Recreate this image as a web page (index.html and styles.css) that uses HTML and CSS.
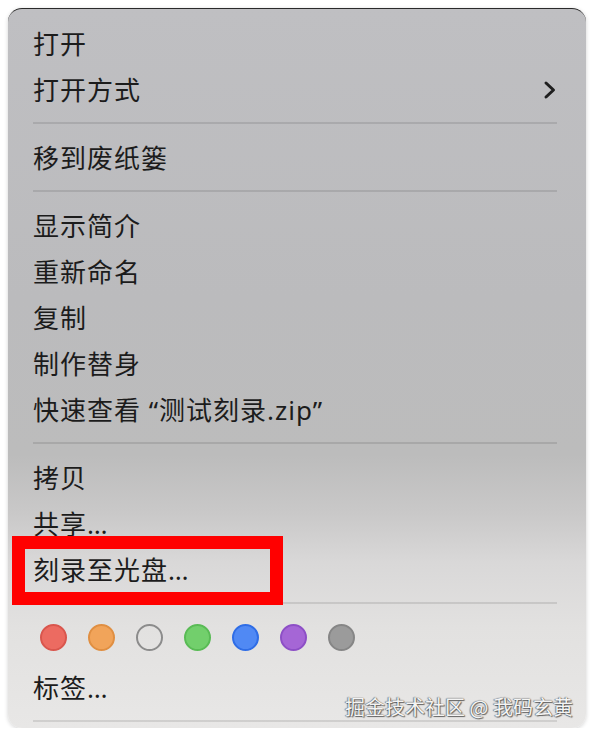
FILE: index.html
```html
<!DOCTYPE html>
<html lang="zh-CN">
<head>
    <meta charset="UTF-8">
    <meta name="viewport" content="width=device-width, initial-scale=1.0">
    <title>右键菜单</title>
    <link rel="stylesheet" href="styles.css">
</head>
<body>

    <!-- Context Menu -->
    <div class="menu">
        <div class="item">打开</div>
        <div class="item has-sub">
            <span>打开方式</span>
            <svg class="chevron" width="14" height="20" viewBox="0 0 14 20">
                <polyline points="3,3 10.5,10 3,17" fill="none" stroke="#1f1f1f" stroke-width="3" stroke-linecap="round" stroke-linejoin="round"/>
            </svg>
        </div>
        <div class="sep"></div>
        <div class="item">移到废纸篓</div>
        <div class="sep"></div>
        <div class="item">显示简介</div>
        <div class="item">重新命名</div>
        <div class="item">复制</div>
        <div class="item">制作替身</div>
        <div class="item">快速查看 “测试刻录.zip”</div>
        <div class="sep"></div>
        <div class="item">拷贝</div>
        <div class="item">共享…</div>
        <div class="item">刻录至光盘…</div>
        <div class="sep"></div>

        <!-- Tag colours -->
        <div class="tags">
            <span class="dot red"></span>
            <span class="dot orange"></span>
            <span class="dot none"></span>
            <span class="dot green"></span>
            <span class="dot blue"></span>
            <span class="dot purple"></span>
            <span class="dot gray"></span>
        </div>
        <div class="item">标签…</div>
        <div class="sep"></div>

        <!-- Highlight box -->
        <div class="highlight"></div>

        <div class="watermark">掘金技术社区 @ 我码玄黄</div>
    </div>

</body>
</html>
```

FILE: styles.css
```css
/* General Styles */
body {
    margin: 0;
    background: #ffffff;
    font-family: "Noto Sans", "Noto Sans CJK SC", sans-serif;
    color: #1c1c1c;
}

/* Menu Panel */
.menu {
    position: relative;
    box-sizing: border-box;
    margin: 8px 0 0 8px;
    width: 578px;
    height: 720px;
    padding: 11px 29px 0 25px;
    border-radius: 14px;
    border-top: 1px solid #2a2a2a;
    overflow: hidden;
    background: linear-gradient(180deg,
        #bfbfc2 0%,
        #bbbbbd 40%,
        #bcbcbc 62%,
        #c9c8c8 70%,
        #d9d8d8 77%,
        #e2e1e0 86%,
        #e8e7e6 100%);
    box-shadow: 0 1px 4px rgba(0, 0, 0, 0.18);
}

/* Rows */
.item {
    height: 46px;
    display: flex;
    align-items: center;
    justify-content: space-between;
    font-size: 26px;
    letter-spacing: 1px;
    white-space: nowrap;
}

.chevron {
    margin-top: 1px;
}

.sep {
    height: 22px;
    display: flex;
    align-items: center;
}

.sep::after {
    content: "";
    display: block;
    width: 100%;
    height: 2px;
    background: rgba(0, 0, 0, 0.1);
}

/* Tags */
.tags {
    height: 46px;
    margin-bottom: 4px;
    display: flex;
    align-items: center;
    gap: 21px;
    padding-left: 7px;
}

.dot {
    box-sizing: border-box;
    width: 27px;
    height: 27px;
    border-radius: 50%;
    border: 2px solid;
}

.red    { background: #ec6b61; border-color: #d9564d; }
.orange { background: #f1a45a; border-color: #e08f42; }
.none   { background: transparent; border-color: #8c8c8c; }
.green  { background: #72cf6c; border-color: #59bb55; }
.blue   { background: #5089f4; border-color: #2f6de6; }
.purple { background: #a566d6; border-color: #8d4fc6; }
.gray   { background: #9b9b9b; border-color: #868686; }

/* Red box */
.highlight {
    position: absolute;
    box-sizing: border-box;
    left: 4px;
    top: 527px;
    width: 271px;
    height: 69px;
    border: 13px solid #ff0000;
}

/* Watermark */
.watermark {
    position: absolute;
    right: 13px;
    top: 683px;
    font-family: "Noto Sans CJK SC", sans-serif;
    font-size: 20px;
    color: #f4f4f4;
    text-shadow: 0 0 1px #444, 1px 1px 1px rgba(0, 0, 0, 0.55), -1px 0 1px rgba(0, 0, 0, 0.35);
}
```
